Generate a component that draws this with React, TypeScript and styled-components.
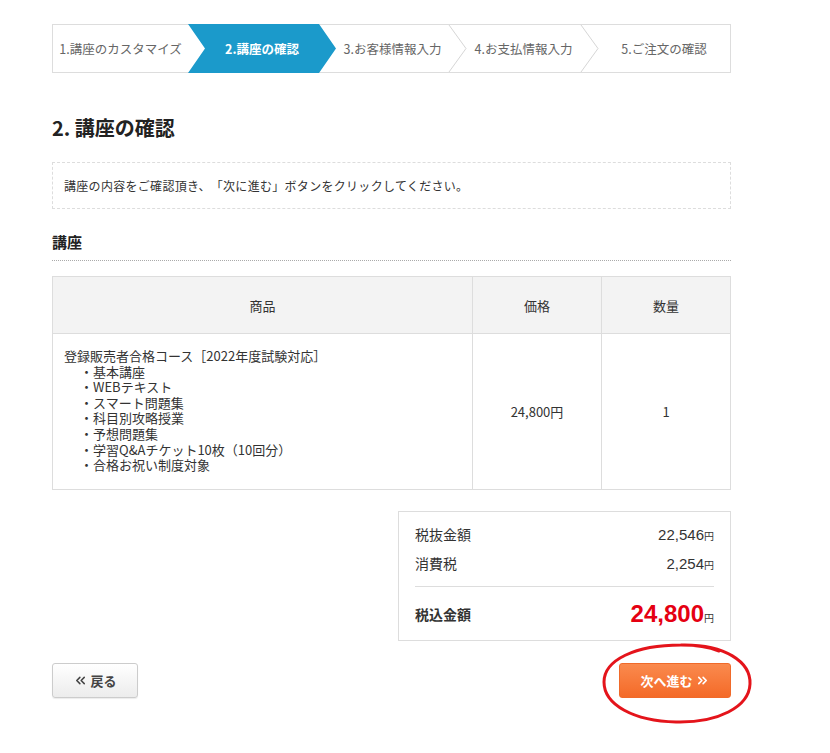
import React from 'react';
import styled, { createGlobalStyle, css } from 'styled-components';
import { ChevronsLeft, ChevronsRight } from 'lucide-react';

const GlobalStyle = createGlobalStyle`
  *, *::before, *::after {
    box-sizing: border-box;
  }
  body {
    margin: 0;
    background: #fff;
    color: #333;
    font-family: "Noto Sans CJK JP", "Noto Sans", sans-serif;
    text-spacing-trim: space-all;
  }
`;

const Page = styled.div`
  width: 679px;
  margin-left: 52px;
  padding-top: 24px;
  padding-bottom: 40px;
`;

const StepBar = styled.ol`
  display: grid;
  grid-template-columns: 135px 131px 130px 132px 1fr;
  height: 49px;
  margin: 0;
  padding: 0;
  list-style: none;
  border: 1px solid #ddd;
`;

const Step = styled.li<{ $active?: boolean; $first?: boolean }>`
  position: relative;
  display: flex;
  align-items: center;
  justify-content: center;
  padding-left: ${(p) => (p.$first ? '0' : '17px')};
  font-size: 12.5px;
  color: #666;
  white-space: nowrap;

  ${(p) =>
    p.$active &&
    css`
      color: #fff;
      font-weight: bold;
      &::before {
        content: '';
        position: absolute;
        top: -1px;
        bottom: -1px;
        left: 0;
        right: -17px;
        background: #1b9acb;
        clip-path: polygon(0 0, calc(100% - 17px) 0, 100% 50%, calc(100% - 17px) 100%, 0 100%, 17px 50%);
        z-index: 1;
      }
    `}
`;

const StepLabel = styled.span`
  position: relative;
  z-index: 2;
`;

const Chevron = styled.svg`
  position: absolute;
  top: 0;
  left: 100%;
  width: 18px;
  height: 100%;
  overflow: visible;
`;

const Title = styled.h2`
  margin: 41px 0 0;
  font-size: 20px;
  line-height: 28px;
  font-weight: bold;
  color: #222;
`;

const Notice = styled.div`
  margin-top: 20px;
  padding: 0 11px;
  height: 47px;
  line-height: 45px;
  border: 1px dashed #ddd;
  font-size: 12px;
  letter-spacing: 0.3px;
  color: #333;
`;

const SectionHead = styled.h3`
  margin: 23px 0 0;
  padding-bottom: 8px;
  font-size: 15px;
  line-height: 20px;
  font-weight: bold;
  color: #222;
  border-bottom: 1px dotted #aaa;
`;

const Table = styled.table`
  width: 100%;
  margin-top: 15px;
  border-collapse: collapse;
  table-layout: fixed;
  font-size: 13px;
  color: #333;
`;

const Th = styled.th<{ $w?: number }>`
  width: ${(p) => (p.$w ? `${p.$w}px` : 'auto')};
  height: 57px;
  background: #f3f3f3;
  border: 1px solid #ddd;
  font-weight: normal;
  text-align: center;
`;

const Td = styled.td<{ $center?: boolean }>`
  border: 1px solid #ddd;
  padding: ${(p) => (p.$center ? '0' : '14px 11px 16px')};
  text-align: ${(p) => (p.$center ? 'center' : 'left')};
  vertical-align: middle;
  line-height: 15.6px;
  white-space: nowrap;
`;

const SubItem = styled.div`
  padding-left: 16px;
`;

const Summary = styled.div`
  width: 333px;
  margin: 21px 0 0 auto;
  padding: 8px 16px 8px;
  border: 1px solid #ddd;
`;

const SumRow = styled.div<{ $total?: boolean }>`
  display: flex;
  justify-content: space-between;
  align-items: center;
  height: 29px;
  font-size: 14px;
  ${(p) =>
    p.$total &&
    css`
      margin-top: 9px;
      height: 36px;
      font-weight: bold;
    `}
`;

const Divider = styled.hr`
  margin: 8px 0 0;
  border: none;
  border-top: 1px solid #ddd;
`;

const Amount = styled.span<{ $total?: boolean }>`
  font-size: ${(p) => (p.$total ? '24px' : '15px')};
  color: ${(p) => (p.$total ? '#e50012' : '#333')};
  font-weight: ${(p) => (p.$total ? 'bold' : 'normal')};
  font-family: "Liberation Sans", "Noto Sans CJK JP", sans-serif;
`;

const Yen = styled.small`
  font-size: 10px;
  color: #333;
  font-weight: normal;
  font-family: "Noto Sans CJK JP", sans-serif;
`;

const Actions = styled.div`
  display: flex;
  justify-content: space-between;
  margin-top: 22px;
`;

const Button = styled.button<{ $primary?: boolean }>`
  position: relative;
  display: inline-flex;
  align-items: center;
  justify-content: center;
  gap: 2px;
  height: 35px;
  border-radius: 3px;
  font-family: inherit;
  font-size: 13px;
  font-weight: bold;
  cursor: pointer;
  ${(p) =>
    p.$primary
      ? css`
          width: 112px;
          border: 1px solid #f06a2a;
          color: #fff;
          background: linear-gradient(#fa8a4e, #f46a28);
        `
      : css`
          width: 86px;
          border: 1px solid #ccc;
          color: #444;
          background: linear-gradient(#ffffff, #ececec);
          box-shadow: 0 1px 1px rgba(0, 0, 0, 0.08);
        `}
`;

const Circle = styled.svg`
  position: absolute;
  left: -19px;
  top: -22px;
  width: 152px;
  height: 83px;
  overflow: visible;
  pointer-events: none;
`;

const steps = ['1.講座のカスタマイズ', '2.講座の確認', '3.お客様情報入力', '4.お支払情報入力', '5.ご注文の確認'];

const items = ['基本講座', 'WEBテキスト', 'スマート問題集', '科目別攻略授業', '予想問題集', '学習Q&Aチケット10枚（10回分）', '合格お祝い制度対象'];

export default function App() {
  return (
    <>
      <GlobalStyle />
      <Page>
        <StepBar>
          {steps.map((s, i) => (
            <Step key={s} $active={i === 1} $first={i === 0}>
              <StepLabel>{s}</StepLabel>
              {i > 1 && i < steps.length - 1 && (
                <Chevron viewBox="0 0 18 47" preserveAspectRatio="none">
                  <polyline points="0,0 17,23.5 0,47" fill="none" stroke="#d6d6d6" strokeWidth="1" />
                </Chevron>
              )}
            </Step>
          ))}
        </StepBar>

        <Title>2. 講座の確認</Title>

        <Notice>講座の内容をご確認頂き、「次に進む」ボタンをクリックしてください。</Notice>

        <SectionHead>講座</SectionHead>

        <Table>
          <thead>
            <tr>
              <Th>商品</Th>
              <Th $w={129}>価格</Th>
              <Th $w={129}>数量</Th>
            </tr>
          </thead>
          <tbody>
            <tr>
              <Td>
                登録販売者合格コース［2022年度試験対応］
                {items.map((it) => (
                  <SubItem key={it}>・{it}</SubItem>
                ))}
              </Td>
              <Td $center>24,800円</Td>
              <Td $center>1</Td>
            </tr>
          </tbody>
        </Table>

        <Summary>
          <SumRow>
            <span>税抜金額</span>
            <Amount>
              22,546<Yen>円</Yen>
            </Amount>
          </SumRow>
          <SumRow>
            <span>消費税</span>
            <Amount>
              2,254<Yen>円</Yen>
            </Amount>
          </SumRow>
          <Divider />
          <SumRow $total>
            <span>税込金額</span>
            <Amount $total>
              24,800<Yen>円</Yen>
            </Amount>
          </SumRow>
        </Summary>

        <Actions>
          <Button>
            <ChevronsLeft size={15} strokeWidth={2.4} />
            戻る
          </Button>
          <Button $primary>
            次へ進む
            <ChevronsRight size={15} strokeWidth={2.6} />
            <Circle viewBox="0 0 152 83">
              <path
                d="M80 3 C 124 2, 150 20, 149 42 C 148 65, 117 81, 75 80 C 33 79, 3 63, 3 40 C 3 18, 34 3, 80 3 C 96 3, 108 5, 118 9"
                fill="none"
                stroke="#e4141b"
                strokeWidth="3"
                strokeLinecap="round"
              />
            </Circle>
          </Button>
        </Actions>
      </Page>
    </>
  );
}
